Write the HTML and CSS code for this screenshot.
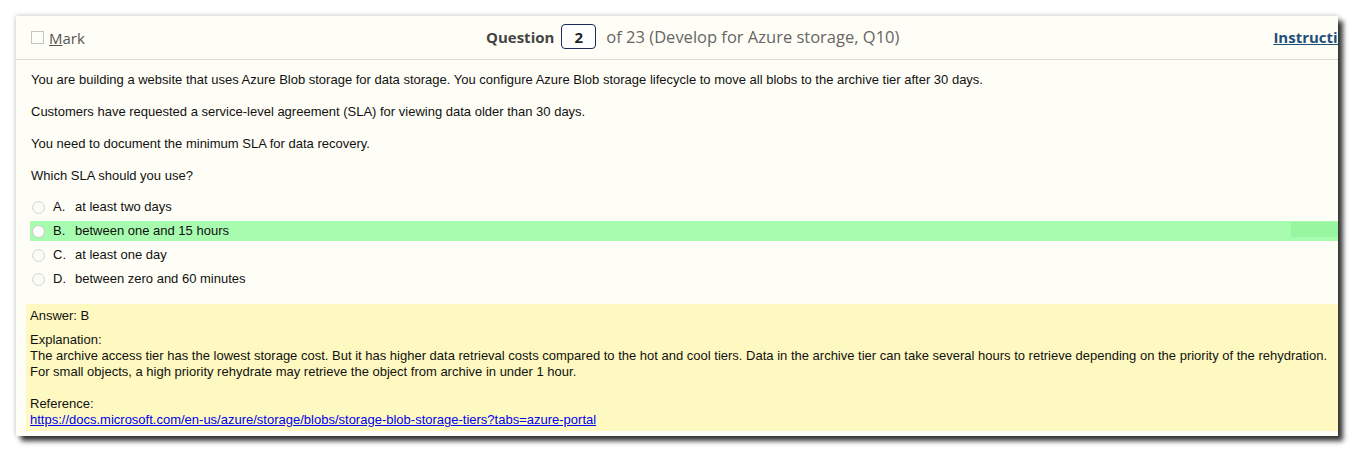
FILE: index.html
```html
<!DOCTYPE html>
<html>
<head>
<meta charset="utf-8">
<link rel="stylesheet" href="styles.css">
</head>
<body>
<div class="panel">
  <div class="header">
    <div class="mark"><span class="checkbox"></span><span class="mark-label"><u>M</u>ark</span></div>
    <div class="title"><b>Question</b><span class="qbox">2</span><span class="of">of 23 (Develop for Azure storage, Q10)</span></div>
    <a class="instr" href="#">Instructions</a>
  </div>
  <div class="body">
    <p>You are building a website that uses Azure Blob storage for data storage. You configure Azure Blob storage lifecycle to move all blobs to the archive tier after 30 days.</p>
    <p>Customers have requested a service-level agreement (SLA) for viewing data older than 30 days.</p>
    <p>You need to document the minimum SLA for data recovery.</p>
    <p class="last">Which SLA should you use?</p>
    <div class="options">
      <div class="opt"><span class="radio"></span><span class="letter">A.</span><span>at least two days</span></div>
      <div class="opt correct"><span class="radio"></span><span class="letter">B.</span><span>between one and 15 hours</span><span class="tag"></span></div>
      <div class="opt"><span class="radio"></span><span class="letter">C.</span><span>at least one day</span></div>
      <div class="opt"><span class="radio"></span><span class="letter">D.</span><span>between zero and 60 minutes</span></div>
    </div>
  </div>
  <div class="answer">
    <div class="ans">Answer: B</div>
    <div class="expl">Explanation:<br>The archive access tier has the lowest storage cost. But it has higher data retrieval costs compared to the hot and cool tiers. Data in the archive tier can take several hours to retrieve depending on the priority of the rehydration.<br>For small objects, a high priority rehydrate may retrieve the object from archive in under 1 hour.<br><br>Reference:<br><a href="#">https://docs.microsoft.com/en-us/azure/storage/blobs/storage-blob-storage-tiers?tabs=azure-portal</a></div>
  </div>
</div>
</body>
</html>
```

FILE: styles.css
```css
html, body {
  margin: 0;
  padding: 0;
  background: #ffffff;
}
body {
  padding: 16px 17px 16px 16px;
}
.panel {
  width: 1322px;
  height: 420px;
  background: #fefef6;
  overflow: hidden;
  box-shadow: 5px 5px 5px rgba(0,0,0,0.78), 0 0 5px rgba(0,0,0,0.25);
  font-family: "Liberation Sans", Arial, sans-serif;
  font-size: 13px;
  color: #111;
}
.header {
  height: 44px;
  border-bottom: 1px solid #dcdcd6;
  display: flex;
  align-items: center;
  padding-left: 14px;
  padding-bottom: 2px;
  box-sizing: border-box;
  font-family: "Open Sans", "Noto Sans", sans-serif;
  font-size: 15px;
  color: #555;
  white-space: nowrap;
}
.mark {
  flex: 0 0 456px;
  display: flex;
  align-items: center;
}
.checkbox {
  width: 11px;
  height: 11px;
  border: 1px solid #c4c4c0;
  background: #fcfcf8;
  margin: 2px 5px 0 1px;
}
.mark-label {
  margin-top: 2px;
}
.title {
  display: flex;
  align-items: center;
  flex-shrink: 0;
}
.title b {
  color: #444;
  font-weight: 700;
}
.qbox {
  width: 33px;
  height: 23px;
  border: 1px solid #1c2b5c;
  border-radius: 4px;
  margin: 0 10px 0 7px;
  display: flex;
  align-items: center;
  justify-content: center;
  color: #222;
  font-weight: 700;
  background: #fff;
}
.of {
  color: #666;
  font-size: 16.5px;
}
.instr {
  flex-shrink: 0;
  margin-left: 374px;
  font-weight: 700;
  color: #1f4e79;
  text-decoration: underline;
}
.body {
  padding: 12px 0 0 15px;
}
.body p {
  margin: 0 0 16px 0;
  line-height: 16px;
}
.body p.last {
  margin-bottom: 13px;
}
.options {
  margin-left: -1px;
}
.opt {
  height: 20px;
  margin-bottom: 4px;
  display: flex;
  align-items: center;
  line-height: 16px;
}
.opt.correct {
  background: #a8fcb0;
}
.radio {
  width: 11px;
  height: 11px;
  border: 1px solid #d6d6d0;
  border-radius: 50%;
  background: #fbfbf6;
  margin: 0 8px 0 2px;
}
.correct .radio {
  background: #ffffff;
  border-color: #c8c8c0;
}
.letter {
  width: 22px;
}
.tag {
  margin-left: auto;
  width: 47px;
  height: 15px;
  background: #98f5a0;
  align-self: flex-start;
  margin-top: 1px;
}
.answer {
  margin: 15px 0 0 10px;
  background: #fef9c0;
  padding: 4px 0 3px 4px;
  line-height: 16px;
  color: #111;
}
.ans {
  margin-bottom: 8px;
}
.expl a {
  color: #0000ee;
  text-decoration: underline;
}
```
